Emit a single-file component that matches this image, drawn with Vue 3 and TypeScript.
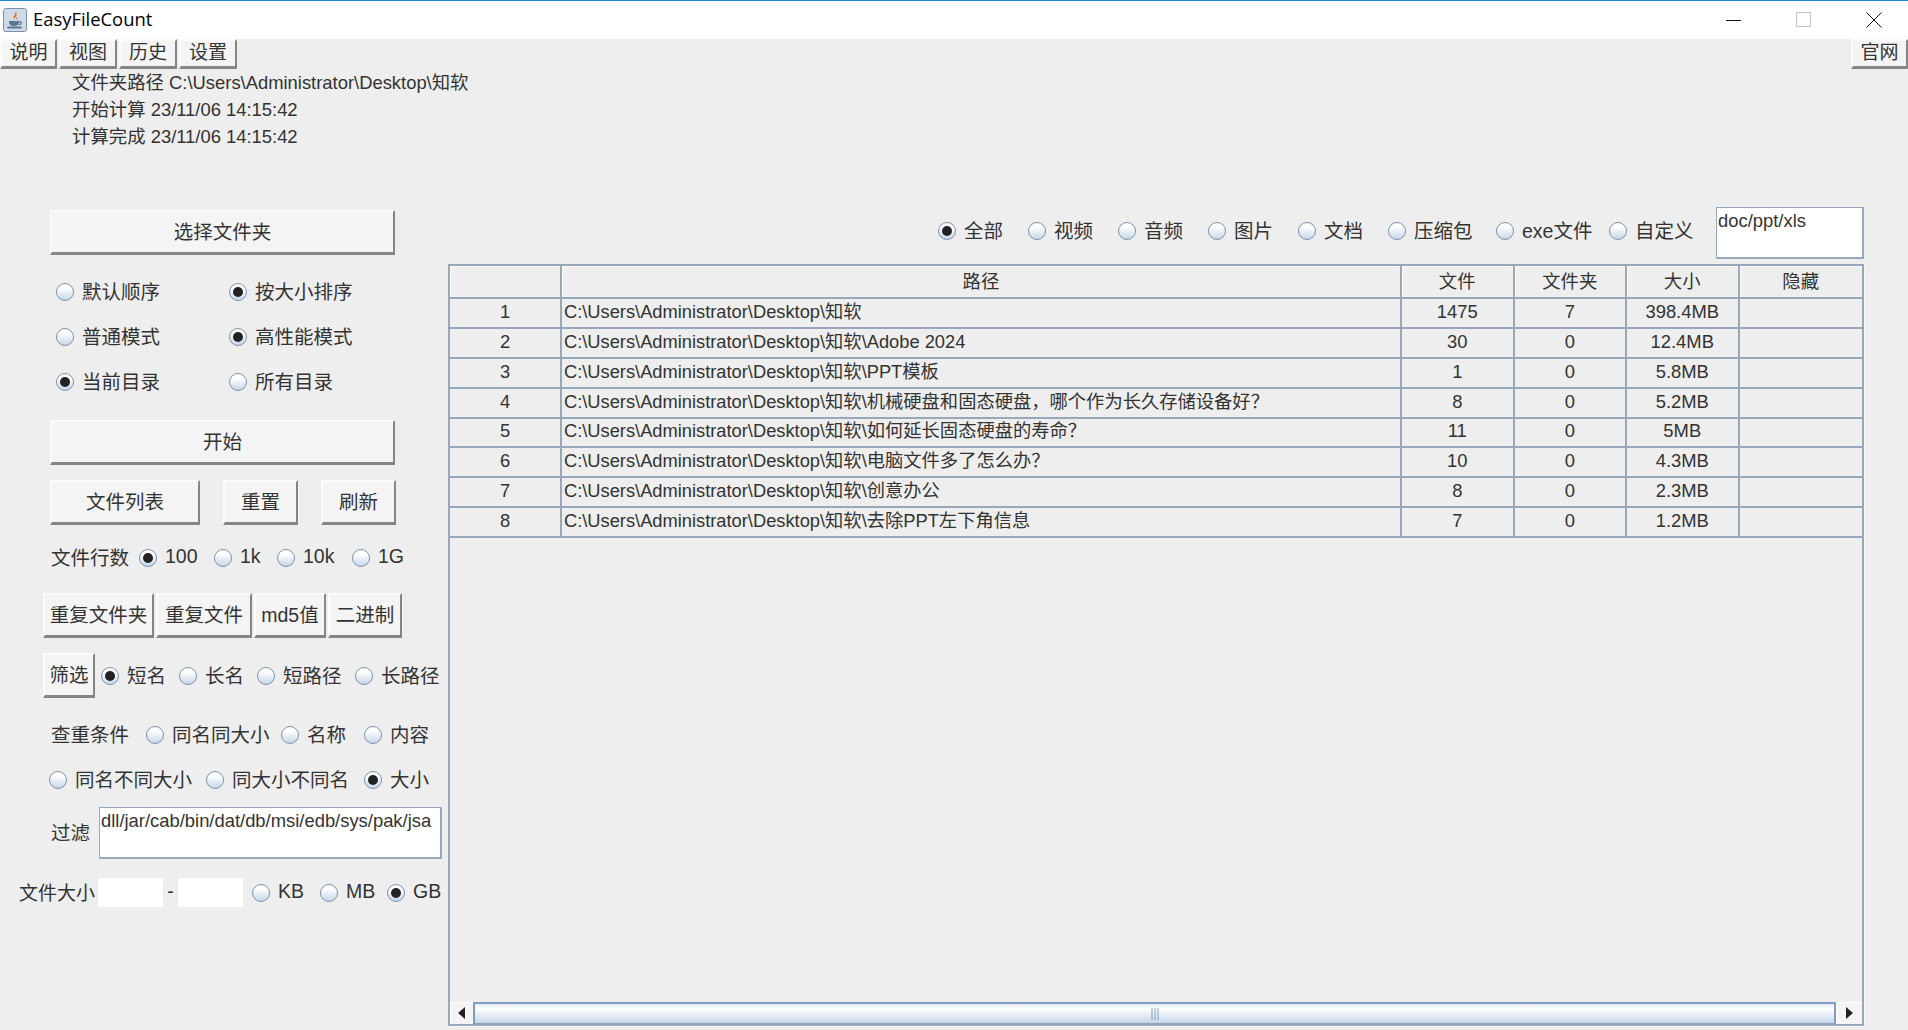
<script setup lang="ts">
type Opt = { text: string; on?: boolean };
type Group = { cls: string; items: Opt[]; lead?: string };

const base = 'C:\\Users\\Administrator\\Desktop\\知软';

const topOptions: Opt[] = [
  { text: '全部', on: true },
  { text: '视频' },
  { text: '音频' },
  { text: '图片' },
  { text: '文档' },
  { text: '压缩包' },
  { text: 'exe文件' },
  { text: '自定义' },
];

const sortGroups: Group[] = [
  { cls: 'r-pair', items: [{ text: '默认顺序' }, { text: '按大小排序', on: true }] },
  { cls: 'r-pair', items: [{ text: '普通模式' }, { text: '高性能模式', on: true }] },
  { cls: 'r-pair', items: [{ text: '当前目录', on: true }, { text: '所有目录' }] },
];

const lineOptions: Opt[] = [{ text: '100', on: true }, { text: '1k' }, { text: '10k' }, { text: '1G' }];
const filterOptions: Opt[] = [{ text: '短名', on: true }, { text: '长名' }, { text: '短路径' }, { text: '长路径' }];
const dupeOptions: Opt[] = [{ text: '同名同大小' }, { text: '名称' }, { text: '内容' }];
const dupeOptions2: Opt[] = [{ text: '同名不同大小' }, { text: '同大小不同名' }, { text: '大小', on: true }];
const unitOptions: Opt[] = [{ text: 'KB' }, { text: 'MB' }, { text: 'GB', on: true }];

const columns = ['', '路径', '文件', '文件夹', '大小', '隐藏'];
const rows = [
  { path: base, files: 1475, dirs: 7, size: '398.4MB' },
  { path: base + '\\Adobe 2024', files: 30, dirs: 0, size: '12.4MB' },
  { path: base + '\\PPT模板', files: 1, dirs: 0, size: '5.8MB' },
  { path: base + '\\机械硬盘和固态硬盘，哪个作为长久存储设备好？', files: 8, dirs: 0, size: '5.2MB' },
  { path: base + '\\如何延长固态硬盘的寿命？', files: 11, dirs: 0, size: '5MB' },
  { path: base + '\\电脑文件多了怎么办？', files: 10, dirs: 0, size: '4.3MB' },
  { path: base + '\\创意办公', files: 8, dirs: 0, size: '2.3MB' },
  { path: base + '\\去除PPT左下角信息', files: 7, dirs: 0, size: '1.2MB' },
];
</script>

<template>
  <div class="window">
    <header class="titlebar">
      <svg class="app-icon" viewBox="0 0 24 24" width="24" height="24">
        <rect x="0.5" y="0.5" width="23" height="23" rx="2" fill="#cfdbe8" stroke="#8090a4" />
        <path d="M12 4c2 2-3 4-1 7 1-2 4-3 2-7zM14 8c1 1-2 3-1 4 1-1 2-2 1-4z" fill="#e2711d" />
        <path d="M6 13h10v1c0 3-2 4-5 4s-5-1-5-4z" fill="#5a7693" />
        <path d="M16 14c3-1 3 2 0 3M5 19h13v1H5z" fill="none" stroke="#5a7693" stroke-width="1.2" />
      </svg>
      <span class="app-title">EasyFileCount</span>
      <div class="win-controls">
        <svg width="16" height="16" viewBox="0 0 16 16"><path d="M0 8.5h15" stroke="#111" /></svg>
        <svg width="16" height="16" viewBox="0 0 16 16"><rect x="0.5" y="0.5" width="14" height="14" fill="none" stroke="#c4c4c4" /></svg>
        <svg width="16" height="16" viewBox="0 0 16 16"><path d="M0.5 0.5l15 15M15.5 0.5l-15 15" stroke="#111" /></svg>
      </div>
    </header>

    <nav class="toolbar">
      <div class="menu">
        <button class="btn m1">说明</button>
        <button class="btn m2">视图</button>
        <button class="btn m2">历史</button>
        <button class="btn m2">设置</button>
      </div>
      <button class="btn m1">官网</button>
    </nav>

    <section class="info">
      <div>文件夹路径 C:\Users\Administrator\Desktop\知软</div>
      <div>开始计算 23/11/06 14:15:42</div>
      <div>计算完成 23/11/06 14:15:42</div>
    </section>

    <main class="main">
      <aside class="side">
        <button class="btn wide">选择文件夹</button>

        <div class="sort-rows">
          <div v-for="(g, i) in sortGroups" :key="i" class="radio-row" :class="g.cls">
            <label v-for="o in g.items" :key="o.text" class="opt">
              <i class="radio" :class="{ on: o.on }"></i><span class="lbl">{{ o.text }}</span>
            </label>
          </div>
        </div>

        <button class="btn wide start">开始</button>

        <div class="action-row">
          <button class="btn a-list">文件列表</button>
          <button class="btn a-small">重置</button>
          <button class="btn a-small">刷新</button>
        </div>

        <div class="radio-row r-lines">
          <span class="lbl">文件行数</span>
          <label v-for="o in lineOptions" :key="o.text" class="opt">
            <i class="radio" :class="{ on: o.on }"></i><span class="lbl">{{ o.text }}</span>
          </label>
        </div>

        <div class="dupe-btns">
          <button class="btn d1">重复文件夹</button>
          <button class="btn d2">重复文件</button>
          <button class="btn d3">md5值</button>
          <button class="btn d4">二进制</button>
        </div>

        <div class="radio-row r-filter">
          <button class="btn f-btn">筛选</button>
          <label v-for="o in filterOptions" :key="o.text" class="opt">
            <i class="radio" :class="{ on: o.on }"></i><span class="lbl">{{ o.text }}</span>
          </label>
        </div>

        <div class="radio-row r-dupe">
          <span class="lbl">查重条件</span>
          <label v-for="o in dupeOptions" :key="o.text" class="opt">
            <i class="radio" :class="{ on: o.on }"></i><span class="lbl">{{ o.text }}</span>
          </label>
        </div>

        <div class="radio-row r-dupe2">
          <label v-for="o in dupeOptions2" :key="o.text" class="opt">
            <i class="radio" :class="{ on: o.on }"></i><span class="lbl">{{ o.text }}</span>
          </label>
        </div>

        <div class="filter-row">
          <span class="filter-label lbl">过滤</span>
          <div class="textbox filter-box">dll/jar/cab/bin/dat/db/msi/edb/sys/pak/jsa</div>
        </div>

        <div class="size-row">
          <span class="size-label lbl">文件大小</span>
          <div class="size-input"></div>
          <span class="dash lbl">-</span>
          <div class="size-input"></div>
          <div class="r-unit">
            <label v-for="o in unitOptions" :key="o.text" class="opt">
              <i class="radio" :class="{ on: o.on }"></i><span class="lbl">{{ o.text }}</span>
            </label>
          </div>
        </div>
      </aside>

      <section class="content">
        <div class="type-row">
          <div class="r-types">
            <label v-for="o in topOptions" :key="o.text" class="opt">
              <i class="radio" :class="{ on: o.on }"></i><span class="lbl">{{ o.text }}</span>
            </label>
          </div>
          <div class="textbox type-box">doc/ppt/xls</div>
        </div>

        <div class="table-frame">
          <div class="table-scroll">
            <table class="grid">
              <colgroup>
                <col class="c-no" />
                <col class="c-path" />
                <col class="c-num" />
                <col class="c-num" />
                <col class="c-num" />
                <col />
              </colgroup>
              <thead>
                <tr>
                  <th v-for="(c, i) in columns" :key="i">{{ c }}</th>
                </tr>
              </thead>
              <tbody>
                <tr v-for="(r, i) in rows" :key="i">
                  <td>{{ i + 1 }}</td>
                  <td class="path">{{ r.path }}</td>
                  <td>{{ r.files }}</td>
                  <td>{{ r.dirs }}</td>
                  <td>{{ r.size }}</td>
                  <td></td>
                </tr>
              </tbody>
            </table>
          </div>
          <div class="scrollbar">
            <div class="arrow left"><svg width="8" height="12" viewBox="0 0 8 12"><path d="M7 0v12L0 6z" fill="#222" /></svg></div>
            <div class="thumb">
              <svg width="8" height="12" viewBox="0 0 8 12"><path d="M1 0v12M4 0v12M7 0v12" stroke="#7f9cc4" /></svg>
            </div>
            <div class="arrow right"><svg width="8" height="12" viewBox="0 0 8 12"><path d="M1 0v12l7-6z" fill="#222" /></svg></div>
          </div>
        </div>
      </section>
    </main>
  </div>
</template>

<style scoped>
.window {
  width: 1908px;
  height: 1030px;
  display: flex;
  flex-direction: column;
  background: #eeeeee;
  color: #333;
  font: 18.4px "Liberation Sans", "Noto Sans CJK SC", sans-serif;
  overflow: hidden;
}

.titlebar {
  height: 39px;
  flex: none;
  box-sizing: border-box;
  display: flex;
  align-items: center;
  padding: 0 0 1px 3px;
  background: #fff;
  border-top: 1px solid #1a86d9;
}

.app-icon {
  flex: none;
}

.app-title {
  margin: 0 0 2px 6px;
  font: 18.4px "Open Sans", sans-serif;
  color: #000;
}

.win-controls {
  margin-left: auto;
  display: flex;
  gap: 54px;
  padding-right: 26px;
}

.toolbar {
  height: 30px;
  flex: none;
  display: flex;
  justify-content: space-between;
  font-size: 19px;
}

.toolbar .btn {
  line-height: 20px;
  padding-bottom: 1px;
}

.menu {
  display: flex;
  gap: 2px;
}

.btn {
  box-sizing: border-box;
  padding: 0 0 3px;
  font: inherit;
  color: #333;
  background: #f4f4f4;
  border: 2px solid;
  border-color: #fbfbfb #858585 #858585 #fbfbfb;
  border-bottom-width: 3px;
  white-space: nowrap;
}

.m1 {
  width: 57px;
  height: 30px;
}

.m2 {
  width: 58px;
  height: 30px;
}

.info {
  height: 81px;
  flex: none;
  padding-left: 72px;
  line-height: 27px;
}

.main {
  flex: 1;
  min-height: 0;
  display: flex;
}

.side {
  width: 448px;
  flex: none;
  box-sizing: border-box;
  padding-top: 60px;
  font-size: 19.5px;
}

.wide {
  display: block;
  width: 345px;
  height: 45px;
  margin-left: 50px;
}

.sort-rows {
  margin-top: 14px;
}

.radio-row {
  display: grid;
  align-items: center;
  height: 45px;
}

.opt {
  display: flex;
  align-items: center;
  gap: 8px;
  white-space: nowrap;
}

.lbl {
  margin-bottom: 3px;
}

.radio {
  width: 18px;
  height: 18px;
  flex: none;
  box-sizing: border-box;
  border: 1px solid #7f93ab;
  border-radius: 50%;
  background: linear-gradient(#fff 25%, #c6d6e8);
  position: relative;
}

.radio.on::after {
  content: "";
  position: absolute;
  inset: 3px;
  border-radius: 50%;
  background: #222;
}

.r-pair {
  padding-left: 56px;
  grid-template-columns: 173px auto;
}

.start {
  margin-top: 16px;
}

.action-row {
  display: flex;
  margin: 15px 0 0 50px;
  gap: 23px;
}

.action-row .btn {
  height: 45px;
}

.a-list {
  width: 150px;
}

.a-small {
  width: 75px;
}

.r-lines {
  margin-top: 10px;
  height: 46px;
  padding-left: 51px;
  grid-template-columns: 88px 75px 63px 75px auto;
}

.dupe-btns {
  display: flex;
  gap: 2px;
  margin: 12px 0 0 43px;
}

.dupe-btns .btn {
  height: 45px;
}

.d1 {
  width: 111px;
}

.d2 {
  width: 96px;
}

.d3 {
  width: 72px;
}

.d4 {
  width: 74px;
}

.r-filter {
  margin-top: 15px;
  padding-left: 43px;
  grid-template-columns: 58px 78px 78px 98px auto;
}

.f-btn {
  width: 52px;
  height: 45px;
}

.r-dupe {
  margin-top: 14px;
  padding-left: 51px;
  grid-template-columns: 95px 135px 83px auto;
}

.r-dupe2 {
  padding-left: 49px;
  grid-template-columns: 157px 158px auto;
}

.filter-row {
  display: flex;
  align-items: center;
  margin-top: 5px;
  padding-left: 51px;
}

.filter-label {
  width: 48px;
}

.textbox {
  box-sizing: border-box;
  background: #fff;
  border: 2px solid #98a8bb;
  border-width: 1px 2px 2px 1px;
  padding-left: 1px;
  line-height: 26px;
  font-size: 18.4px;
  white-space: nowrap;
  overflow: hidden;
}

.filter-box {
  width: 343px;
  height: 52px;
}

.size-row {
  display: flex;
  align-items: center;
  margin-top: 19px;
  height: 29px;
  padding-left: 19px;
}

.size-label {
  width: 79px;
  font-size: 19px;
}

.size-input {
  width: 65px;
  height: 29px;
  background: #fff;
}

.dash {
  width: 15px;
  text-align: center;
}

.r-unit {
  display: grid;
  grid-template-columns: 68px 67px auto;
  margin-left: 9px;
}

.content {
  flex: 1;
  min-width: 0;
  box-sizing: border-box;
  display: flex;
  flex-direction: column;
  padding: 57px 44px 4px 0;
}

.type-row {
  display: flex;
  justify-content: flex-end;
  align-items: center;
  margin-bottom: 5px;
}

.r-types {
  display: grid;
  grid-template-columns: repeat(5, 90px) 108px 113px 107px;
  padding-bottom: 4px;
  font-size: 19.5px;
}

.type-box {
  width: 148px;
  height: 52px;
}

.table-frame {
  flex: 1;
  min-height: 0;
  display: flex;
  flex-direction: column;
  border: 2px solid #98a8bb;
  box-shadow: 1px 1px 0 #f8f8f8;
}

.table-scroll {
  flex: 1;
  min-height: 0;
}

.grid {
  width: 100%;
  table-layout: fixed;
  border-collapse: collapse;
  line-height: 22px;
}

.c-no {
  width: 111px;
}

.c-path {
  width: 840px;
}

.c-num {
  width: 112.5px;
}

.grid th,
.grid td {
  box-sizing: border-box;
  padding: 0 0 2px;
  border: 2px solid #98a8bb;
  font-weight: 400;
  text-align: center;
  white-space: nowrap;
  overflow: hidden;
}

.grid th:first-child,
.grid td:first-child {
  border-left: 0;
}

.grid th:last-child,
.grid td:last-child {
  border-right: 0;
}

.grid th {
  height: 32px;
  padding-bottom: 0;
  border-top: 0;
  box-shadow: inset 1px 1px 0 #fff;
}

.grid td {
  height: 29.875px;
}

.grid td.path {
  padding-left: 2px;
  text-align: left;
  font-size: 18.3px;
}

.scrollbar {
  height: 22px;
  flex: none;
  display: flex;
}

.arrow {
  flex: none;
  display: flex;
  align-items: center;
  justify-content: center;
  background: #f4f4f4;
  box-shadow: inset 1px 1px 0 #fff;
}

.arrow.left {
  width: 23px;
}

.arrow.right {
  width: 26px;
}

.thumb {
  flex: 1;
  display: flex;
  align-items: center;
  justify-content: center;
  box-sizing: border-box;
  border: 2px solid #7f9cc4;
  border-width: 2px 2px 1px;
  border-bottom-color: #8fa3bb;
  background: linear-gradient(#e6eef6, #fff 25%, #c6d6e8);
}
</style>

<style>
html,
body {
  background: #eeeeee;
}
</style>
